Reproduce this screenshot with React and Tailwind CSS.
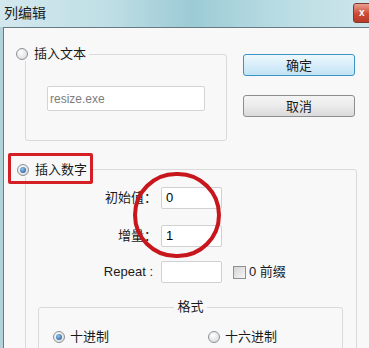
import React from "react";

const Radio = ({ checked }) => (
  <span className="w-[12px] h-[12px] shrink-0 rounded-full border border-[#8d9196] bg-[radial-gradient(circle_at_40%_35%,#ffffff,#d2d4d6)] flex items-center justify-center">
    {checked && (
      <span className="w-[6px] h-[6px] rounded-full bg-[radial-gradient(circle_at_40%_35%,#8ec6ee,#1d4f8c)]" />
    )}
  </span>
);

const Field = ({ label, value, latin }) => (
  <div className="flex items-center h-[22px]">
    <span className={"w-[131px] text-right text-[13px] text-[#1a1a1a] " + (latin ? "pr-[4px] text-[12px]" : "")}>
      {label}
    </span>
    <div className="ml-[4px] w-[61px] h-[22px] border border-[#cfd1d4] rounded-[2px] bg-white flex items-center pl-[4px] text-[13px] text-black">
      {value}
    </div>
  </div>
);

export default function App() {
  return (
    <div className="relative w-[369px] h-[348px] overflow-hidden bg-[#f8f8f8] font-['Liberation_Sans','Noto_Sans_CJK_SC',sans-serif] text-[#1a1a1a]">
      {/* title bar */}
      <div className="h-[27px] flex items-center bg-[linear-gradient(90deg,#d3e8ee_0%,#bedee5_30%,#9ccbd5_52%,#b8dce3_75%,#cde6eb_100%)]">
        <span className="flex-1 pl-[4px] text-[14px] text-[#1c1c1c]">列编辑</span>
        <div className="w-[40px] h-[20px] -mr-[24px] mb-[2px] rounded-[3px] border border-[#7d3a2e] bg-[linear-gradient(180deg,#e9a08e,#cc4a36_55%,#b73a26)] flex items-center pl-[5px] text-white text-[10px] font-bold leading-none">
          x
        </div>
      </div>

      {/* window body */}
      <div className="flex h-[321px]">
        <div className="w-[3px] bg-[#b3d3db]" />
        <div className="flex-1 border-l border-t border-[#687a82]">
          {/* top area */}
          <div className="flex items-start">
            <div className="ml-[21px] mt-[26px] w-[202px] h-[87px] border border-[#dadada] rounded-[3px]">
              <div className="-mt-[8px] -ml-[10px] w-fit flex items-center gap-[6px] bg-[#f8f8f8] pr-[3px] h-[14px]">
                <Radio />
                <span className="text-[13px]">插入文本</span>
              </div>
              <div className="ml-[21px] mt-[25px] w-[158px] h-[25px] border border-[#d2d4d6] rounded-[2px] bg-white flex items-center pl-[2px] text-[12px] text-[#7d7d7d]">
                resize.exe
              </div>
            </div>
            <div className="ml-[16px] mt-[26px] flex flex-col">
              <button className="w-[112px] h-[22px] rounded-[3px] border border-[#3b94c4] bg-[linear-gradient(180deg,#eef8fd,#d8eefa_50%,#c2e3f4)] text-[13px] text-[#1a1a1a] leading-none">
                确定
              </button>
              <button className="mt-[19px] w-[112px] h-[22px] rounded-[3px] border border-[#8c8d8e] bg-[linear-gradient(180deg,#f4f4f4,#ebebeb_50%,#dadada)] text-[13px] text-[#1a1a1a] leading-none">
                取消
              </button>
            </div>
          </div>

          {/* insert number group */}
          <div className="ml-[21px] mt-[28px] w-[332px] h-[200px] border border-[#dadada] rounded-[3px]">
            <div className="-mt-[7px] -ml-[9px] w-fit flex items-center gap-[6px] bg-[#f8f8f8] pr-[5px] h-[14px]">
              <Radio checked />
              <span className="text-[13px]">插入数字</span>
            </div>
            <div className="mt-[10px]">
              <Field label="初始值：" value="0" />
            </div>
            <div className="mt-[16px]">
              <Field label="增量：" value="1" />
            </div>
            <div className="mt-[14px] flex items-center">
              <Field label="Repeat :" value="" latin />
              <span className="ml-[11px] w-[13px] h-[13px] border border-[#8f9093] bg-[linear-gradient(135deg,#d4d4d4,#f6f6f6)]" />
              <span className="ml-[3px] text-[13px]">0 前缀</span>
            </div>

            {/* format group */}
            <div className="ml-[12px] mt-[24px] w-[305px] h-[60px] border border-[#dadada] rounded-[3px]">
              <div className="-mt-[8px] flex justify-center h-[14px]">
                <span className="bg-[#f8f8f8] px-[3px] text-[13px] leading-[14px]">格式</span>
              </div>
              <div className="mt-[16px] ml-[14px] flex items-center h-[14px]">
                <div className="w-[155px] flex items-center gap-[5px]">
                  <Radio checked />
                  <span className="text-[13px]">十进制</span>
                </div>
                <div className="flex items-center gap-[5px]">
                  <Radio />
                  <span className="text-[13px]">十六进制</span>
                </div>
              </div>
            </div>
          </div>
        </div>
      </div>

      {/* annotations */}
      <div className="absolute left-[8px] top-[153px] w-[85px] h-[31px] border-[3px] border-[#d51f26] rounded-[2px]" />
      <div className="absolute left-[133px] top-[172px] w-[88px] h-[86px] rounded-full border-[4px] border-[#c8161d]" />
    </div>
  );
}
